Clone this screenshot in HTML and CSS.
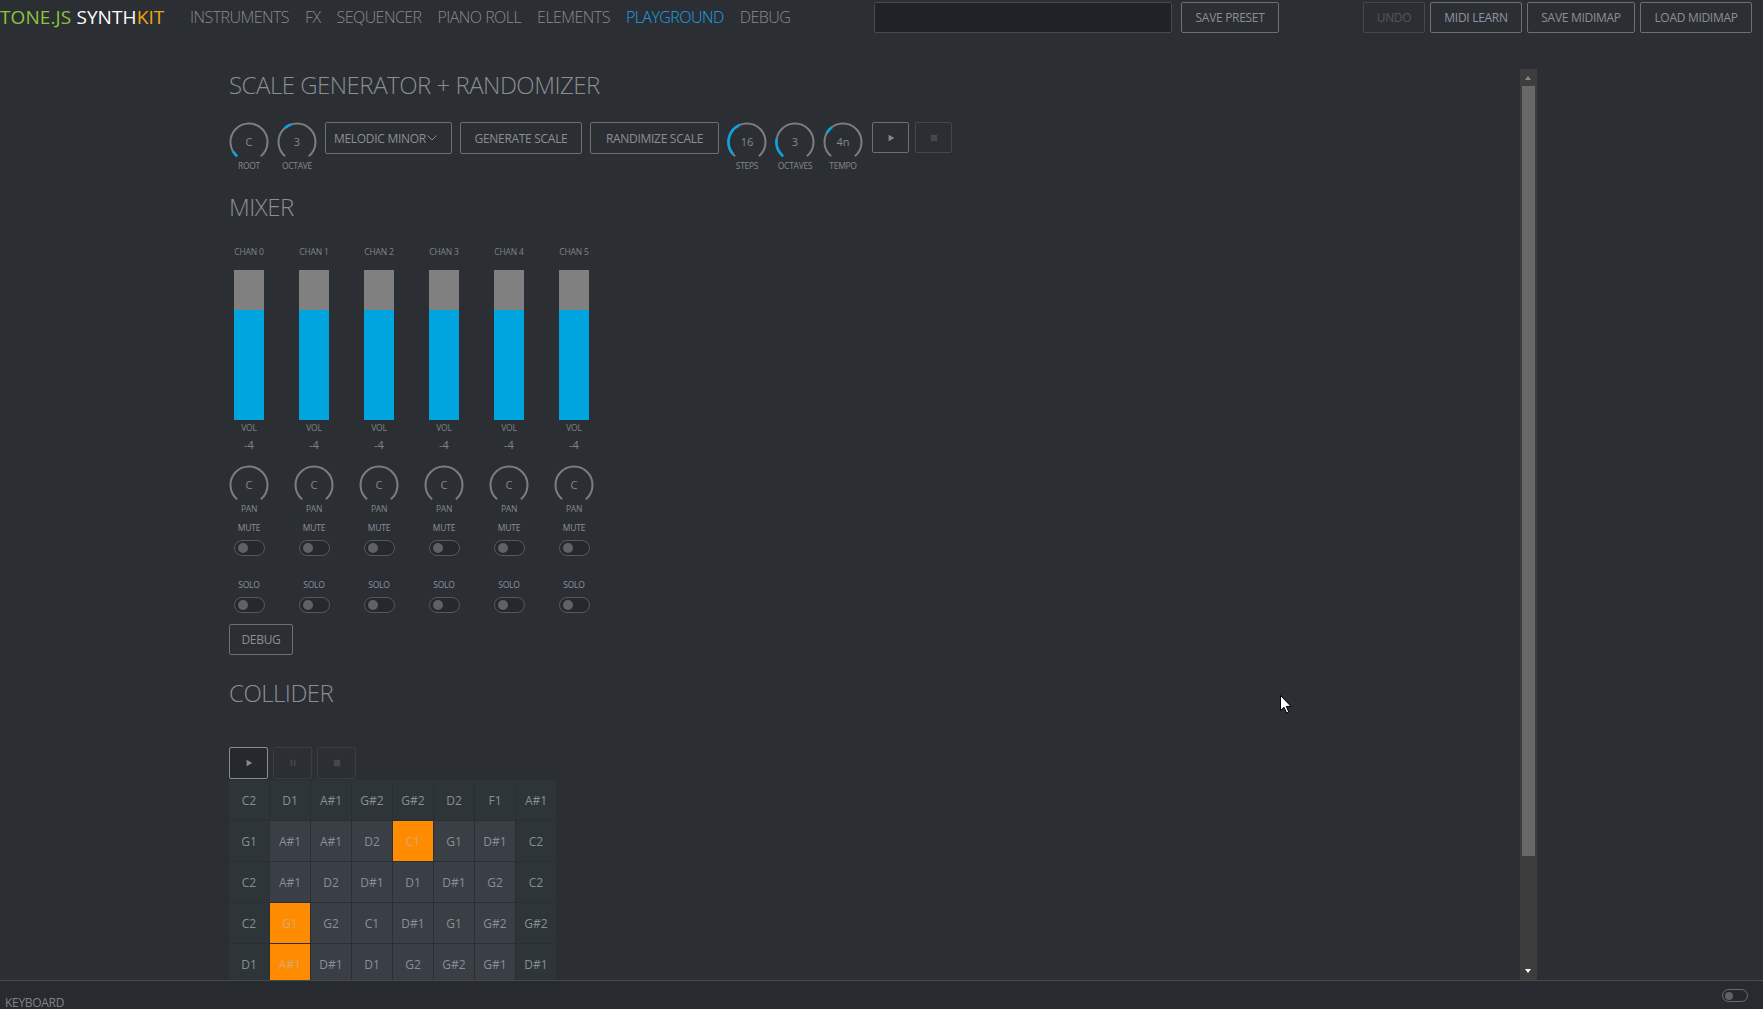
FILE: index.html
```html
<!DOCTYPE html>
<html>
<head>
<meta charset="utf-8">
<title>Tone.js SynthKit</title>
<link rel="stylesheet" href="styles.css">
</head>
<body>
<div class="app">
  <header class="topbar">
    <div class="logo"><span class="lg-green">TONE.JS</span> <span class="lg-white">SYNTH</span><span class="lg-orange">KIT</span></div>
    <nav class="nav">
      <a class="nav-item">INSTRUMENTS</a>
      <a class="nav-item">FX</a>
      <a class="nav-item">SEQUENCER</a>
      <a class="nav-item">PIANO ROLL</a>
      <a class="nav-item">ELEMENTS</a>
      <a class="nav-item active">PLAYGROUND</a>
      <a class="nav-item">DEBUG</a>
    </nav>
    <div class="preset">
      <div class="preset-input"></div>
      <button class="btn top-btn save-preset">SAVE PRESET</button>
    </div>
    <div class="actions">
      <button class="btn top-btn undo disabled">UNDO</button>
      <button class="btn top-btn midi-learn">MIDI LEARN</button>
      <button class="btn top-btn save-map">SAVE MIDIMAP</button>
      <button class="btn top-btn load-map">LOAD MIDIMAP</button>
    </div>
  </header>

  <main class="main">
    <div class="scroller">
      <div class="content">
        <h2 class="section-title">SCALE GENERATOR + RANDOMIZER</h2>
        <div class="scale-row">
          <div class="knob">
            <svg class="knob-svg" viewBox="0 0 40 40"><path class="ring" d="M8.11 34.17 A18.5 18.5 0 1 1 31.89 34.17"/><path class="val" d="M8.11 34.17 A18.5 18.5 0 0 1 4.31 29.8"/></svg>
            <span class="knob-value">C</span>
            <span class="knob-label">ROOT</span>
          </div>
          <div class="knob">
            <svg class="knob-svg" viewBox="0 0 40 40"><path class="ring" d="M8.11 34.17 A18.5 18.5 0 1 1 31.89 34.17"/><path class="val" d="M7.62 6.25 A18.5 18.5 0 0 1 13.98 2.51"/></svg>
            <span class="knob-value">3</span>
            <span class="knob-label">OCTAVE</span>
          </div>
          <button class="btn ctl-btn dropdown">MELODIC MINOR<svg class="chev" viewBox="0 0 10 6"><path d="M0.5 0.5 L5 5 L9.5 0.5"/></svg></button>
          <button class="btn ctl-btn gen">GENERATE SCALE</button>
          <button class="btn ctl-btn rand">RANDIMIZE SCALE</button>
          <div class="knob">
            <svg class="knob-svg" viewBox="0 0 40 40"><path class="ring" d="M8.11 34.17 A18.5 18.5 0 1 1 31.89 34.17"/><path class="val" d="M5.83 31.89 A18.5 18.5 0 0 1 12.18 3.23"/></svg>
            <span class="knob-value">16</span>
            <span class="knob-label">STEPS</span>
          </div>
          <div class="knob">
            <svg class="knob-svg" viewBox="0 0 40 40"><path class="ring" d="M8.11 34.17 A18.5 18.5 0 1 1 31.89 34.17"/><path class="val" d="M8.11 34.17 A18.5 18.5 0 0 1 1.78 16.79"/></svg>
            <span class="knob-value">3</span>
            <span class="knob-label">OCTAVES</span>
          </div>
          <div class="knob">
            <svg class="knob-svg" viewBox="0 0 40 40"><path class="ring" d="M8.11 34.17 A18.5 18.5 0 1 1 31.89 34.17"/><path class="val" d="M3.98 10.75 A18.5 18.5 0 0 1 8.87 5.23"/></svg>
            <span class="knob-value">4n</span>
            <span class="knob-label">TEMPO</span>
          </div>
          <button class="btn icon-btn play"><svg viewBox="0 0 10 10"><path d="M2 1 L9 5 L2 9 Z"/></svg></button>
          <button class="btn icon-btn stop disabled"><svg viewBox="0 0 10 10"><rect x="1" y="1" width="8" height="8"/></svg></button>
        </div>

        <h2 class="section-title mixer-title">MIXER</h2>
        <div class="mixer">
          <div class="chan">
            <div class="small-label">CHAN 0</div>
            <div class="fader"><div class="fader-fill"></div></div>
            <div class="small-label vol">VOL</div>
            <div class="vol-val">-4</div>
            <div class="pan"><svg class="knob-svg" viewBox="0 0 40 40"><path class="ring" d="M8.11 34.17 A18.5 18.5 0 1 1 31.89 34.17"/></svg><span class="knob-value">C</span><span class="knob-label">PAN</span></div>
            <div class="small-label tgl-label mute-label">MUTE</div>
            <div class="toggle"><span class="dot"></span></div>
            <div class="small-label tgl-label solo-label">SOLO</div>
            <div class="toggle"><span class="dot"></span></div>
          </div>
          <div class="chan">
            <div class="small-label">CHAN 1</div>
            <div class="fader"><div class="fader-fill"></div></div>
            <div class="small-label vol">VOL</div>
            <div class="vol-val">-4</div>
            <div class="pan"><svg class="knob-svg" viewBox="0 0 40 40"><path class="ring" d="M8.11 34.17 A18.5 18.5 0 1 1 31.89 34.17"/></svg><span class="knob-value">C</span><span class="knob-label">PAN</span></div>
            <div class="small-label tgl-label mute-label">MUTE</div>
            <div class="toggle"><span class="dot"></span></div>
            <div class="small-label tgl-label solo-label">SOLO</div>
            <div class="toggle"><span class="dot"></span></div>
          </div>
          <div class="chan">
            <div class="small-label">CHAN 2</div>
            <div class="fader"><div class="fader-fill"></div></div>
            <div class="small-label vol">VOL</div>
            <div class="vol-val">-4</div>
            <div class="pan"><svg class="knob-svg" viewBox="0 0 40 40"><path class="ring" d="M8.11 34.17 A18.5 18.5 0 1 1 31.89 34.17"/></svg><span class="knob-value">C</span><span class="knob-label">PAN</span></div>
            <div class="small-label tgl-label mute-label">MUTE</div>
            <div class="toggle"><span class="dot"></span></div>
            <div class="small-label tgl-label solo-label">SOLO</div>
            <div class="toggle"><span class="dot"></span></div>
          </div>
          <div class="chan">
            <div class="small-label">CHAN 3</div>
            <div class="fader"><div class="fader-fill"></div></div>
            <div class="small-label vol">VOL</div>
            <div class="vol-val">-4</div>
            <div class="pan"><svg class="knob-svg" viewBox="0 0 40 40"><path class="ring" d="M8.11 34.17 A18.5 18.5 0 1 1 31.89 34.17"/></svg><span class="knob-value">C</span><span class="knob-label">PAN</span></div>
            <div class="small-label tgl-label mute-label">MUTE</div>
            <div class="toggle"><span class="dot"></span></div>
            <div class="small-label tgl-label solo-label">SOLO</div>
            <div class="toggle"><span class="dot"></span></div>
          </div>
          <div class="chan">
            <div class="small-label">CHAN 4</div>
            <div class="fader"><div class="fader-fill"></div></div>
            <div class="small-label vol">VOL</div>
            <div class="vol-val">-4</div>
            <div class="pan"><svg class="knob-svg" viewBox="0 0 40 40"><path class="ring" d="M8.11 34.17 A18.5 18.5 0 1 1 31.89 34.17"/></svg><span class="knob-value">C</span><span class="knob-label">PAN</span></div>
            <div class="small-label tgl-label mute-label">MUTE</div>
            <div class="toggle"><span class="dot"></span></div>
            <div class="small-label tgl-label solo-label">SOLO</div>
            <div class="toggle"><span class="dot"></span></div>
          </div>
          <div class="chan">
            <div class="small-label">CHAN 5</div>
            <div class="fader"><div class="fader-fill"></div></div>
            <div class="small-label vol">VOL</div>
            <div class="vol-val">-4</div>
            <div class="pan"><svg class="knob-svg" viewBox="0 0 40 40"><path class="ring" d="M8.11 34.17 A18.5 18.5 0 1 1 31.89 34.17"/></svg><span class="knob-value">C</span><span class="knob-label">PAN</span></div>
            <div class="small-label tgl-label mute-label">MUTE</div>
            <div class="toggle"><span class="dot"></span></div>
            <div class="small-label tgl-label solo-label">SOLO</div>
            <div class="toggle"><span class="dot"></span></div>
          </div>
        </div>
        <button class="btn debug-btn">DEBUG</button>

        <h2 class="section-title collider-title">COLLIDER</h2>
        <div class="transport">
          <button class="btn tr-btn active-tr"><svg viewBox="0 0 10 10"><path d="M2 1 L9 5 L2 9 Z"/></svg></button>
          <button class="btn tr-btn disabled"><svg viewBox="0 0 10 10"><rect x="2" y="1" width="2" height="8"/><rect x="6" y="1" width="2" height="8"/></svg></button>
          <button class="btn tr-btn disabled"><svg viewBox="0 0 10 10"><rect x="1" y="1" width="8" height="8"/></svg></button>
        </div>
        <div class="grid">
          <div class="cell edge">C2</div><div class="cell edge">D1</div><div class="cell edge">A#1</div><div class="cell edge">G#2</div><div class="cell edge">G#2</div><div class="cell edge">D2</div><div class="cell edge">F1</div><div class="cell edge">A#1</div>
          <div class="cell edge">G1</div><div class="cell">A#1</div><div class="cell">A#1</div><div class="cell">D2</div><div class="cell hit">C1</div><div class="cell">G1</div><div class="cell">D#1</div><div class="cell edge">C2</div>
          <div class="cell edge">C2</div><div class="cell">A#1</div><div class="cell">D2</div><div class="cell">D#1</div><div class="cell">D1</div><div class="cell">D#1</div><div class="cell">G2</div><div class="cell edge">C2</div>
          <div class="cell edge">C2</div><div class="cell hit">G1</div><div class="cell">G2</div><div class="cell">C1</div><div class="cell">D#1</div><div class="cell">G1</div><div class="cell">G#2</div><div class="cell edge">G#2</div>
          <div class="cell edge">D1</div><div class="cell hit">A#1</div><div class="cell">D#1</div><div class="cell">D1</div><div class="cell">G2</div><div class="cell">G#2</div><div class="cell">G#1</div><div class="cell edge">D#1</div>
        </div>
      </div>
      <div class="scrollbar">
        <div class="sb-arrow sb-up"></div>
        <div class="sb-track"><div class="sb-thumb"></div></div>
        <div class="sb-arrow sb-down"></div>
      </div>
    </div>
    <svg class="cursor" viewBox="0 0 12 19"><path d="M0.5 0.5 L0.5 15.5 L4 12.2 L6.6 18 L8.8 17 L6.3 11.4 L11 11.4 Z"/></svg>
  </main>

  <footer class="footer">
    <span class="kbd-label">KEYBOARD</span>
    <div class="toggle footer-toggle"><span class="dot"></span></div>
  </footer>
</div>
</body>
</html>
```

FILE: styles.css
```css
* { box-sizing: border-box; }
html, body { margin: 0; padding: 0; }
body {
  background: #2b2f33;
  font-family: "Open Sans", "Noto Sans", sans-serif;
  color: #8a8e95;
  width: 1763px;
  height: 1009px;
  overflow: hidden;
}
.app { display: flex; flex-direction: column; height: 1009px; }

/* top bar */
.topbar {
  height: 34px;
  display: flex;
  align-items: center;
  padding-right: 11px;
}
.logo {
  width: 166px;
  font-size: 19px;
  font-weight: 400;
  letter-spacing: 0.1px;
  white-space: nowrap;
  line-height: 34px;
}
.lg-green { color: #8cc43f; }
.lg-white { color: #ffffff; }
.lg-orange { color: #eca614; }
.nav { display: flex; gap: 16px; margin-left: 24px; }
.nav-item {
  font-size: 16px;
  font-weight: 300;
  color: #8a8a8a;
  letter-spacing: -0.55px;
  white-space: nowrap;
}
.nav-item.active { color: #1ea2e6; }
.preset { display: flex; align-items: center; gap: 9px; margin-left: auto; }
.preset-input {
  width: 298px;
  height: 31px;
  background: #1f2226;
  border: 1px solid #474a4f;
  border-radius: 2px;
}
.actions { display: flex; gap: 5px; margin-left: auto; }

.btn {
  font-family: inherit;
  background: transparent;
  border: 1px solid #6c6f73;
  border-radius: 2px;
  color: #8a8e95;
  font-size: 12px;
  letter-spacing: -0.3px;
  padding: 0;
  display: flex;
  align-items: center;
  justify-content: center;
  white-space: nowrap;
}
.btn.disabled { border-color: #44474c; color: #54575c; }
.top-btn { height: 31px; }
.save-preset { width: 98px; }
.undo { width: 62px; }
.midi-learn { width: 92px; color: #8c94a2; }
.save-map { width: 108px; }
.load-map { width: 112px; }

/* main */
.main {
  flex: 1;
  padding-top: 35px;
  position: relative;
  min-height: 0;
}
.scroller {
  width: 1311px;
  height: 911px;
  margin: 0 auto;
  display: flex;
  overflow: hidden;
}
.content {
  flex: 1;
  padding-left: 3px;
  padding-top: 1px;
  overflow: hidden;
}
.section-title {
  margin: 0;
  font-size: 24px;
  font-weight: 300;
  line-height: 29px;
  color: #8a8e95;
  letter-spacing: -0.5px;
}

/* scale row */
.scale-row {
  display: flex;
  gap: 8px;
  margin-top: 23px;
  height: 48px;
  align-items: flex-start;
}
.knob, .pan {
  position: relative;
  width: 40px;
  display: flex;
  flex-direction: column;
  align-items: center;
}
.knob { height: 48px; }
.knob-svg { width: 40px; height: 40px; display: block; }
.knob-svg .ring { fill: none; stroke: #7b7d80; stroke-width: 2; }
.knob-svg .val { fill: none; stroke: #0ba3e3; stroke-width: 2.6; }
.knob-value {
  position: absolute;
  top: 0;
  left: 0;
  width: 40px;
  line-height: 40px;
  text-align: center;
  font-size: 11px;
  color: #85888d;
}
.knob-label {
  font-size: 8.5px;
  line-height: 8px;
  color: #83878d;
  letter-spacing: -0.3px;
}
.ctl-btn { height: 32px; font-size: 12px; }
.dropdown { width: 127px; justify-content: flex-start; padding-left: 8px; }
.chev { width: 10px; height: 6px; margin-left: 1px; }
.chev path { fill: none; stroke: #8a8e95; stroke-width: 1; }
.gen { width: 122px; }
.rand { width: 129px; }
.icon-btn { width: 37px; height: 31px; margin-left: 1px; }
.icon-btn svg { width: 8px; height: 8px; }
.icon-btn.play svg path { fill: #8a8a8a; }
.icon-btn.stop { margin-left: -2px; }
.icon-btn.stop svg rect { fill: #44474b; }

/* mixer */
.mixer-title { margin-top: 22px; }
.mixer {
  display: flex;
  gap: 25px;
  margin-top: 26px;
}
.chan {
  width: 40px;
  display: flex;
  flex-direction: column;
  align-items: center;
}
.small-label {
  font-size: 8.5px;
  line-height: 10px;
  color: #7f8388;
  white-space: nowrap;
  letter-spacing: -0.2px;
}
.fader {
  width: 30px;
  height: 150px;
  margin-top: 13px;
  background: #808080;
  display: flex;
  flex-direction: column;
  justify-content: flex-end;
}
.fader-fill { height: 110px; background: #00a5e0; }
.vol { margin-top: 3px; }
.vol-val { font-size: 11px; line-height: 14px; margin-top: 5px; color: #80848a; }
.pan { margin-top: 13px; }
.pan .knob-label { line-height: 10px; margin-top: -1px; }
.tgl-label { color: #8a8fa0; }
.mute-label { margin-top: 9px; }
.solo-label { margin-top: 24px; }
.toggle {
  width: 31px;
  height: 16px;
  border: 1px solid #55585d;
  border-radius: 8px;
  background: #25282c;
  display: flex;
  align-items: center;
  padding-left: 3px;
}
.chan .toggle { margin-top: 7px; }
.dot { width: 10px; height: 10px; border-radius: 50%; background: #5e6166; }
.debug-btn {
  margin-top: 11px;
  width: 64px;
  height: 31px;
  font-size: 12px;
}

/* collider */
.collider-title { margin-top: 23px; }
.transport { display: flex; gap: 5px; margin-top: 40px; }
.tr-btn { width: 39px; height: 32px; }
.tr-btn svg { width: 8px; height: 8px; }
.tr-btn.active-tr { border-color: #8a8c8f; background: #25282c; }
.tr-btn.active-tr path { fill: #8a8a8a; }
.tr-btn.disabled { border-color: #3a3d42; }
.tr-btn.disabled rect { fill: #44474b; }
.grid {
  margin-top: 1px;
  display: grid;
  grid-template-columns: repeat(8, 40px);
  grid-auto-rows: 40px;
  gap: 1px;
  width: 327px;
}
.cell {
  background: #3a3e45;
  display: flex;
  align-items: center;
  justify-content: center;
  font-size: 12px;
  color: #8a8e95;
}
.cell.edge { background: #2d3539; }
.cell.hit { background: #ff8c00; color: #d9a774; }

/* scrollbar */
.scrollbar {
  width: 17px;
  background: #3d3d3d;
  display: flex;
  flex-direction: column;
  align-items: center;
}
.sb-arrow { height: 17px; width: 17px; position: relative; }
.sb-up::after, .sb-down::after {
  content: "";
  position: absolute;
  left: 5px;
  border-left: 3.5px solid transparent;
  border-right: 3.5px solid transparent;
}
.sb-up::after { top: 7px; border-bottom: 4px solid #8b8b8b; }
.sb-down::after { top: 6px; border-top: 4px solid #ffffff; }
.sb-track { flex: 1; width: 13px; }
.sb-thumb { height: 770px; background: #686868; }

.cursor {
  position: absolute;
  left: 1280px;
  top: 661px;
  width: 12px;
  height: 19px;
}
.cursor path { fill: #ffffff; stroke: #000000; stroke-width: 1; }

/* footer */
.footer {
  height: 29px;
  border-top: 1px solid #46494e;
  background: #272a2e;
  display: flex;
  justify-content: space-between;
  align-items: flex-start;
  padding: 0 15px 0 5px;
}
.kbd-label {
  font-size: 12px;
  line-height: 12px;
  margin-top: 16px;
  color: #7f8388;
  letter-spacing: -0.3px;
}
.footer-toggle {
  width: 26px;
  height: 13px;
  margin-top: 8px;
  padding-left: 2px;
  border-color: #6a6d72;
}
.footer-toggle .dot { width: 8px; height: 8px; }
```
